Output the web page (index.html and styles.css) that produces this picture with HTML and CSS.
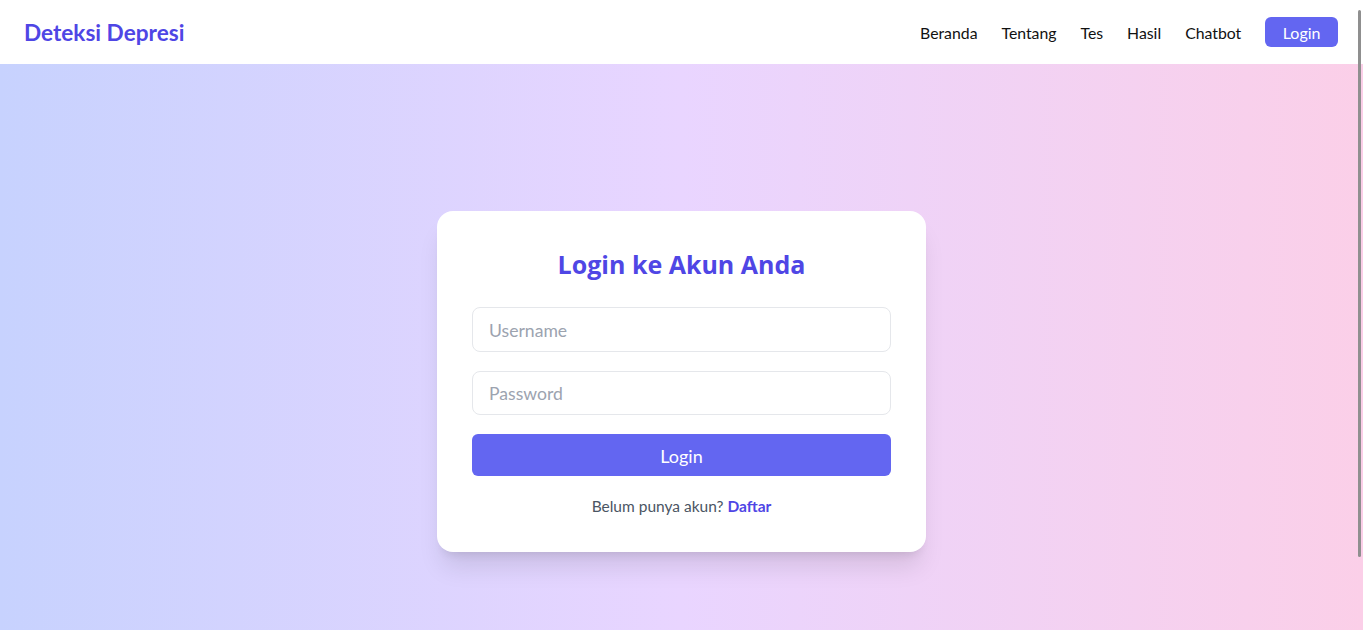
FILE: index.html
```html
<!DOCTYPE html>
<html lang="id">
<head>
<meta charset="utf-8">
<title>Deteksi Depresi - Login</title>
<link rel="stylesheet" href="styles.css">
</head>
<body>
<nav class="nav">
  <a class="logo" href="#">Deteksi Depresi</a>
  <div class="links">
    <a href="#">Beranda</a>
    <a href="#">Tentang</a>
    <a href="#">Tes</a>
    <a href="#">Hasil</a>
    <a href="#">Chatbot</a>
    <a href="#" class="nav-btn">Login</a>
  </div>
</nav>
<main class="main">
  <form class="card">
    <h2 class="title">Login ke Akun Anda</h2>
    <input class="field" type="text" placeholder="Username">
    <input class="field field-2" type="password" placeholder="Password">
    <button class="submit" type="button">Login</button>
    <p class="note">Belum punya akun? <a href="#">Daftar</a></p>
  </form>
</main>
<div class="scroll-thumb"></div>
</body>
</html>
```
FILE: styles.css
```css
html, body {
  margin: 0;
  height: 100%;
  overflow: hidden;
}
body {
  font-family: "Segoe UI", Lato, "Noto Sans", sans-serif;
  color: #111827;
}
a { text-decoration: none; color: inherit; }

.nav {
  height: 64px;
  box-sizing: border-box;
  display: flex;
  align-items: center;
  justify-content: space-between;
  padding: 0 25px 0 24px;
  background: #fff;
  position: relative;
  z-index: 1;
}
.logo {
  font-size: 22.6px;
  font-weight: 700;
  color: #4f46e5;
}
.links {
  display: flex;
  align-items: center;
  gap: 24px;
  font-size: 15.8px;
  color: #111;
}
.nav-btn {
  height: 30px;
  display: flex;
  align-items: center;
  padding: 0 17.5px;
  background: #6366f1;
  color: #fff;
  border-radius: 6px;
  font-size: 16px;
}

.main {
  height: calc(100% - 64px);
  box-sizing: border-box;
  display: flex;
  justify-content: center;
  align-items: flex-start;
  padding-top: 147px;
  background: linear-gradient(to right, #c7d2fe, #e9d5ff, #fbcfe8);
}
.card {
  width: 489px;
  box-sizing: border-box;
  padding: 37px 35px 36px;
  background: #fff;
  border-radius: 16px;
  box-shadow: 0 20px 25px -5px rgba(0,0,0,0.1), 0 8px 10px -6px rgba(0,0,0,0.1);
  display: flex;
  flex-direction: column;
}
.title {
  margin: 0 0 27px;
  font-family: "Open Sans", "Noto Sans", sans-serif;
  font-size: 25px;
  line-height: 32px;
  font-weight: 700;
  text-align: center;
  color: #4f46e5;
}
.field {
  height: 45px;
  box-sizing: border-box;
  border: 1px solid #e5e7eb;
  border-radius: 8px;
  padding: 1px 16px 0;
  font-family: inherit;
  font-size: 17.6px;
  color: #111827;
  outline: none;
}
.field::placeholder { color: #9ca3af; }
.field-2 { margin-top: 19px; height: 44px; }
.submit {
  margin-top: 19px;
  height: 42px;
  padding-top: 2px;
  border: 0;
  border-radius: 6px;
  background: #6366f1;
  color: #fff;
  font-family: inherit;
  font-size: 18px;
}
.note {
  margin: 20px 0 0;
  font-size: 15.5px;
  line-height: 20px;
  text-align: center;
  color: #4b5563;
}
.note a {
  color: #4f46e5;
  font-weight: 700;
}

.scroll-thumb {
  position: fixed;
  right: 2px;
  top: 10px;
  width: 3px;
  height: 547px;
  background: #8f8f8f;
  border-radius: 2px;
  z-index: 2;
}
```
